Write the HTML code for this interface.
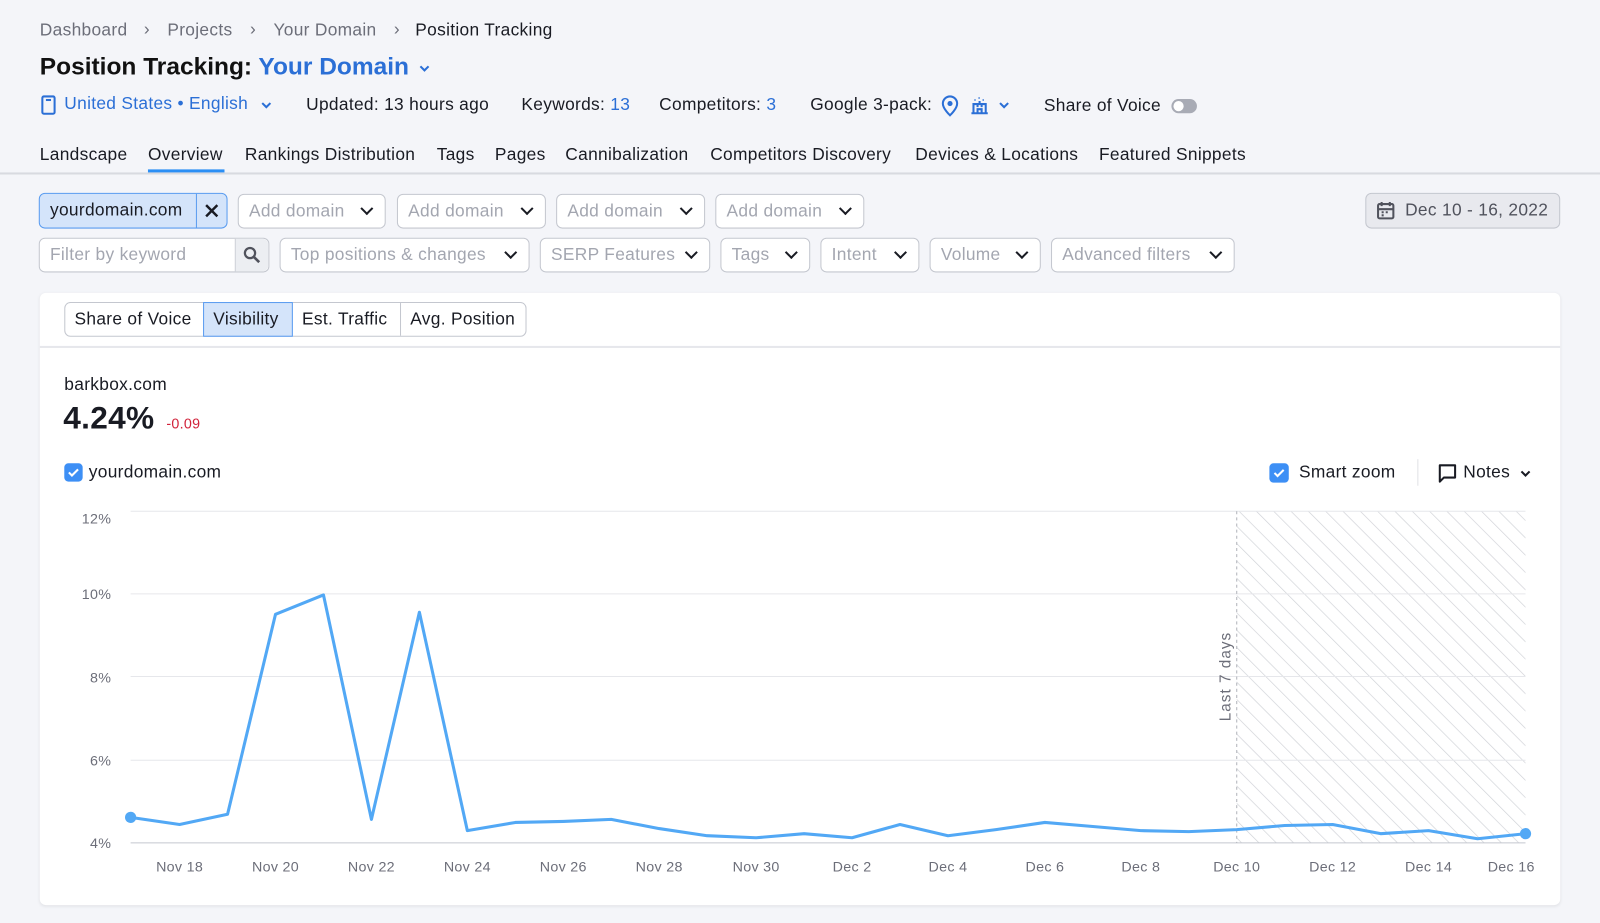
<!DOCTYPE html>
<html><head><meta charset="utf-8"><style>
*{box-sizing:border-box;margin:0;padding:0}
html,body{width:1600px;height:923px;overflow:hidden;background:#f4f5f9}
#w{position:absolute;left:0;top:0;width:1568px;height:905px;transform:scale(1.020408);transform-origin:0 0;font-family:"Liberation Sans",sans-serif;color:#191b23;font-size:17px;letter-spacing:.3px}
.a{position:absolute;white-space:nowrap}
.g{color:#6c6e79}
.b{color:#2b6fd6}
.box{position:absolute;border:1px solid #c4c7cf;border-radius:6px;background:#fff;height:34px;line-height:32px;padding-left:10px;color:#a3a6b0;font-size:17px}
.chev{position:absolute;right:13px;top:9px;width:9px;height:9px;border-right:2.4px solid #191b23;border-bottom:2.4px solid #191b23;transform:rotate(45deg)}
.tab{position:absolute;top:142px;font-size:17px}
</style></head><body><div id="w">
<div class="a g" style="left:39px;top:20px">Dashboard</div>
<div class="a g" style="left:141px;top:19px">›</div>
<div class="a g" style="left:164px;top:20px">Projects</div>
<div class="a g" style="left:245px;top:19px">›</div>
<div class="a g" style="left:268px;top:20px">Your Domain</div>
<div class="a g" style="left:386px;top:19px">›</div>
<div class="a" style="left:407px;top:20px">Position Tracking</div>
<div class="a" style="left:39px;top:52px;font-size:24px;font-weight:bold;color:#111;letter-spacing:0">Position Tracking: <span style="color:#2b6fd6">Your Domain</span></div>
<svg class="a" style="left:409px;top:60px" width="14" height="14"><path d="M3 5l4 4 4-4" stroke="#2b6fd6" stroke-width="2" fill="none"/></svg>
<svg class="a" style="left:40px;top:93px" width="15" height="20"><rect x="1.5" y="1.5" width="12" height="17" rx="1.5" fill="none" stroke="#2b6fd6" stroke-width="2"/><rect x="5" y="4" width="5" height="2" fill="#2b6fd6"/></svg>
<div class="a b" style="left:63px;top:92px">United States • English</div>
<svg class="a" style="left:254px;top:96px" width="14" height="14"><path d="M3 5l4 4 4-4" stroke="#2b6fd6" stroke-width="2" fill="none"/></svg>
<div class="a" style="left:300px;top:93px">Updated: 13 hours ago</div>
<div class="a" style="left:511px;top:93px">Keywords: <span class="b">13</span></div>
<div class="a" style="left:646px;top:93px">Competitors: <span class="b">3</span></div>
<div class="a" style="left:794px;top:93px">Google 3-pack:</div>
<svg class="a" style="left:921px;top:93px" width="20" height="22"><path d="M10 20s-7-6.5-7-11.5a7 7 0 0 1 14 0C17 13.5 10 20 10 20z" fill="none" stroke="#2b6fd6" stroke-width="2"/><circle cx="10" cy="8.5" r="2.5" fill="#2b6fd6"/></svg>
<svg class="a" style="left:950px;top:93px" width="20" height="20"><path d="M2 18h16M4 18V9h12v9M8 18v-4h4v4M7 11h2M11 11h2" stroke="#2b6fd6" stroke-width="2" fill="none"/><path d="M5 5h1M9 3h1M13 5h1M10 6v3" stroke="#2b6fd6" stroke-width="2"/></svg>
<svg class="a" style="left:977px;top:96px" width="14" height="14"><path d="M3 5l4 4 4-4" stroke="#2b6fd6" stroke-width="2" fill="none"/></svg>
<div class="a" style="left:1023px;top:94px">Share of Voice</div>
<div class="a" style="left:1148px;top:97px;width:25px;height:14px;border-radius:7px;background:#a8abb5"><div style="position:absolute;left:2px;top:2px;width:10px;height:10px;border-radius:5px;background:#fff"></div></div>
<div class="tab" style="left:39px">Landscape</div>
<div class="tab" style="left:145px">Overview</div>
<div class="a" style="left:145px;top:166px;width:75px;height:3px;background:#2b8ff5"></div>
<div class="tab" style="left:240px">Rankings Distribution</div>
<div class="tab" style="left:428px">Tags</div>
<div class="tab" style="left:485px">Pages</div>
<div class="tab" style="left:554px">Cannibalization</div>
<div class="tab" style="left:696px">Competitors Discovery</div>
<div class="tab" style="left:897px">Devices &amp; Locations</div>
<div class="tab" style="left:1077px">Featured Snippets</div>
<div class="a" style="left:0;top:169px;width:1568px;height:2px;background:#d8dae0"></div>

<div class="a" style="left:38px;top:189px;width:185px;height:35px;border:1px solid #5a9cf0;border-radius:6px;background:#d4e4fa"></div>
<div class="a" style="left:192px;top:190px;width:1px;height:33px;background:#5a9cf0"></div>
<div class="a" style="left:49px;top:196px">yourdomain.com</div>
<svg class="a" style="left:200px;top:199px" width="15" height="15"><path d="M2 2l11 11M13 2L2 13" stroke="#191b23" stroke-width="2.4"/></svg>
<div class="box" style="left:233px;top:190px;width:145px">Add domain<i class="chev"></i></div>
<div class="box" style="left:389px;top:190px;width:146px">Add domain<i class="chev"></i></div>
<div class="box" style="left:545px;top:190px;width:146px">Add domain<i class="chev"></i></div>
<div class="box" style="left:701px;top:190px;width:146px">Add domain<i class="chev"></i></div>
<div class="a" style="left:1338px;top:189px;width:191px;height:35px;border:1px solid #c4c7cf;border-radius:6px;background:#e8e9ee"></div>
<svg class="a" style="left:1349px;top:197px" width="18" height="19"><rect x="1.5" y="3" width="15" height="14" rx="1.5" fill="none" stroke="#50525c" stroke-width="2"/><path d="M1.5 8h15M5 1v4M13 1v4M5 11h2M9 11h2M5 14h2" stroke="#50525c" stroke-width="2"/></svg>
<div class="a" style="left:1377px;top:196px;color:#50525c">Dec 10 - 16, 2022</div>

<div class="box" style="left:38px;top:233px;width:226px">Filter by keyword</div>
<div class="a" style="left:230px;top:234px;width:33px;height:32px;background:#eceef2;border-left:1px solid #c4c7cf;border-radius:0 6px 6px 0"></div>
<svg class="a" style="left:238px;top:241px" width="18" height="18"><circle cx="7" cy="7" r="5" fill="none" stroke="#50525c" stroke-width="2.2"/><path d="M11 11l5 5" stroke="#50525c" stroke-width="2.6"/></svg>
<div class="box" style="left:274px;top:233px;width:245px">Top positions &amp; changes<i class="chev"></i></div>
<div class="box" style="left:529px;top:233px;width:167px">SERP Features<i class="chev"></i></div>
<div class="box" style="left:706px;top:233px;width:88px">Tags<i class="chev"></i></div>
<div class="box" style="left:804px;top:233px;width:97px">Intent<i class="chev"></i></div>
<div class="box" style="left:911px;top:233px;width:109px">Volume<i class="chev"></i></div>
<div class="box" style="left:1030px;top:233px;width:180px">Advanced filters<i class="chev"></i></div>

<div class="a" style="left:39px;top:287px;width:1490px;height:600px;background:#fff;border-radius:6px;box-shadow:0 1px 3px rgba(0,0,0,.08)"></div>
<div class="a" style="left:39px;top:339px;width:1490px;height:2px;background:#e6e7ec"></div>
<div class="a" style="left:63px;top:296px;width:453px;height:34px;border:1px solid #c4c7cf;border-radius:6px"></div>
<div class="a" style="left:199px;top:296px;width:88px;height:34px;border:1px solid #5a9cf0;background:#d4e4fa"></div>
<div class="a" style="left:392px;top:297px;width:1px;height:32px;background:#c4c7cf"></div>
<div class="a" style="left:73px;top:303px">Share of Voice</div>
<div class="a" style="left:209px;top:303px">Visibility</div>
<div class="a" style="left:296px;top:303px">Est. Traffic</div>
<div class="a" style="left:402px;top:303px">Avg. Position</div>

<div class="a" style="left:63px;top:367px">barkbox.com</div>
<div class="a" style="left:62px;top:392px;font-size:31px;font-weight:bold">4.24%</div>
<div class="a" style="left:163px;top:407px;font-size:14px;color:#d1233b">-0.09</div>
<div class="a" style="left:63px;top:454px;width:18px;height:18px;border-radius:4px;background:#3d8ff5"></div>
<svg class="a" style="left:63px;top:454px" width="18" height="18"><path d="M4.5 9l3 3 6-6" stroke="#fff" stroke-width="2" fill="none"/></svg>
<div class="a" style="left:87px;top:453px">yourdomain.com</div>
<div class="a" style="left:1244px;top:454px;width:19px;height:19px;border-radius:4px;background:#3d8ff5"></div>
<svg class="a" style="left:1244px;top:454px" width="19" height="19"><path d="M5 9.5l3 3 6-6" stroke="#fff" stroke-width="2" fill="none"/></svg>
<div class="a" style="left:1273px;top:453px">Smart zoom</div>
<div class="a" style="left:1389px;top:450px;width:1px;height:26px;background:#e0e1e6"></div>
<svg class="a" style="left:1409px;top:454px" width="20" height="20"><path d="M2 2h15v12H6l-4 4z" fill="none" stroke="#191b23" stroke-width="2" stroke-linejoin="round"/></svg>
<div class="a" style="left:1434px;top:453px">Notes</div>
<svg class="a" style="left:1488px;top:457px" width="14" height="14"><path d="M3 5l4 4 4-4" stroke="#191b23" stroke-width="2" fill="none"/></svg>

<svg class="a" style="left:0;top:0" width="1568" height="905" font-family="Liberation Sans, sans-serif">
<defs><pattern id="h" width="12" height="12" patternUnits="userSpaceOnUse" patternTransform="rotate(-45)"><line x1="0" y1="0" x2="0" y2="12" stroke="#cfd1d6" stroke-width="1.3"/></pattern></defs>
<rect x="1212" y="501" width="283" height="325" fill="url(#h)"/>
<g stroke="#e6e7eb" stroke-width="1"><line x1="128" y1="501" x2="1495" y2="501"/><line x1="128" y1="582" x2="1495" y2="582"/><line x1="128" y1="663" x2="1495" y2="663"/><line x1="128" y1="745" x2="1495" y2="745"/></g>
<line x1="128" y1="826" x2="1495" y2="826" stroke="#c4c7cf"/>
<line x1="1212" y1="501" x2="1212" y2="826" stroke="#b0b3ba" stroke-dasharray="3,3"/>
<text x="1206" y="663" transform="rotate(-90 1206 663)" text-anchor="middle" font-size="15" fill="#6c6e79" letter-spacing="1">Last 7 days</text>
<g font-size="14" fill="#6c6e79" text-anchor="end"><text x="109" y="513">12%</text><text x="109" y="587">10%</text><text x="109" y="669">8%</text><text x="109" y="750">6%</text><text x="109" y="831">4%</text></g>
<g font-size="14" fill="#6c6e79" text-anchor="middle"><text x="176" y="854">Nov 18</text><text x="270" y="854">Nov 20</text><text x="364" y="854">Nov 22</text><text x="458" y="854">Nov 24</text><text x="552" y="854">Nov 26</text><text x="646" y="854">Nov 28</text><text x="741" y="854">Nov 30</text><text x="835" y="854">Dec 2</text><text x="929" y="854">Dec 4</text><text x="1024" y="854">Dec 6</text><text x="1118" y="854">Dec 8</text><text x="1212" y="854">Dec 10</text><text x="1306" y="854">Dec 12</text><text x="1400" y="854">Dec 14</text><text x="1481" y="854">Dec 16</text></g>
<polyline fill="none" stroke="#52a8f5" stroke-width="3" stroke-linejoin="round" points="128,801 176,808 223,798 270,602 317,583 364,803 411,600 458,814 505,806 552,805 599,803 646,812 693,819 741,821 788,817 835,821 882,808 929,819 976,813 1024,806 1071,810 1118,814 1165,815 1212,813 1259,809 1306,808 1353,817 1400,814 1448,822 1495,817"/>
<circle cx="128" cy="801" r="5.5" fill="#52a8f5"/><circle cx="1495" cy="817" r="5.5" fill="#52a8f5"/>
</svg>
</div></body></html>
